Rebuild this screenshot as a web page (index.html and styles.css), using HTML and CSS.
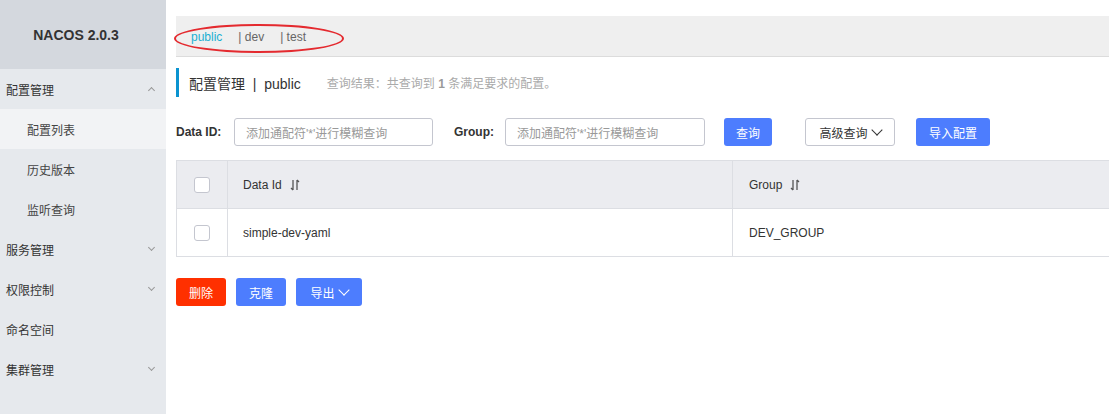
FILE: index.html
```html
<!DOCTYPE html>
<html lang="zh">
<head>
<meta charset="utf-8">
<title>NACOS</title>
<link rel="stylesheet" href="styles.css">
</head>
<body>
<div class="app">
  <aside class="sidebar">
    <div class="brand">NACOS 2.0.3</div>
    <ul class="menu">
      <li class="menu-item">配置管理<span class="chev up"></span></li>
      <li class="menu-item sub active">配置列表</li>
      <li class="menu-item sub">历史版本</li>
      <li class="menu-item sub">监听查询</li>
      <li class="menu-item">服务管理<span class="chev"></span></li>
      <li class="menu-item">权限控制<span class="chev"></span></li>
      <li class="menu-item">命名空间</li>
      <li class="menu-item">集群管理<span class="chev"></span></li>
    </ul>
  </aside>
  <main class="main">
    <div class="ns-bar">
      <span class="ns active">public</span>
      <span class="ns">| dev</span>
      <span class="ns">| test</span>
      <span class="ns-mark"></span>
    </div>
    <div class="title-row">
      <span class="title">配置管理 &nbsp;|&nbsp; public</span>
      <span class="result">查询结果：共查询到 <b>1</b> 条满足要求的配置。</span>
    </div>
    <div class="search-row">
      <label class="lbl">Data ID:</label>
      <div class="input">添加通配符'*'进行模糊查询</div>
      <label class="lbl lbl-group">Group:</label>
      <div class="input input-group">添加通配符'*'进行模糊查询</div>
      <button class="btn primary btn-query">查询</button>
      <button class="btn normal btn-adv">高级查询 <span class="down"></span></button>
      <button class="btn primary btn-import">导入配置</button>
    </div>
    <div class="table">
      <div class="tr thead">
        <div class="td c-check"><span class="cb"></span></div>
        <div class="td c-id">Data Id <svg class="sort" viewBox="0 0 10 12" width="10" height="12"><path d="M3 1v10M3 11L1 9M7 11V1M7 1l2 2" fill="none" stroke="#555" stroke-width="1.3"/></svg></div>
        <div class="td c-group">Group <svg class="sort" viewBox="0 0 10 12" width="10" height="12"><path d="M3 1v10M3 11L1 9M7 11V1M7 1l2 2" fill="none" stroke="#555" stroke-width="1.3"/></svg></div>
      </div>
      <div class="tr">
        <div class="td c-check"><span class="cb"></span></div>
        <div class="td c-id">simple-dev-yaml</div>
        <div class="td c-group">DEV_GROUP</div>
      </div>
    </div>
    <div class="actions">
      <button class="btn danger w50">删除</button>
      <button class="btn primary w50">克隆</button>
      <button class="btn primary w66">导出 <span class="down white"></span></button>
    </div>
  </main>
</div>
</body>
</html>
```

FILE: styles.css
```css
* { box-sizing: border-box; }
html, body { margin: 0; padding: 0; }
body {
  font-family: "Liberation Sans", "Noto Sans CJK SC", sans-serif;
  font-size: 12px;
  color: #333;
  background: #fff;
  width: 1109px;
  height: 414px;
  overflow: hidden;
}
.app { display: flex; height: 414px; }
.sidebar {
  width: 166px;
  flex: none;
  background: #e6e9ed;
}
.brand {
  height: 69px;
  background: #d4d8de;
  display: flex;
  align-items: center;
  justify-content: center;
  padding-right: 14px;
  font-weight: bold;
  font-size: 14px;
  color: #333;
}
.menu { list-style: none; margin: 0; padding: 0; }
.menu-item {
  height: 40px;
  display: flex;
  align-items: center;
  padding-left: 6px;
  position: relative;
  color: #333;
  font-size: 12px;
}
.menu-item.sub { padding-left: 27px; color: #444; }
.menu-item.active { background: #f2f3f5; }
.chev {
  position: absolute;
  right: 12px;
  top: 16px;
  width: 5px;
  height: 5px;
  border-right: 1px solid #999;
  border-bottom: 1px solid #999;
  transform: rotate(45deg);
}
.chev.up { top: 19px; transform: rotate(-135deg); }

.main {
  flex: 1;
  padding: 16px 0 0 10px;
  overflow: hidden;
}
.ns-bar {
  height: 41px;
  background: #efefef;
  border-bottom: 1px solid #dcdcdc;
  display: flex;
  align-items: center;
  padding-left: 15px;
  padding-top: 2px;
  position: relative;
  font-size: 12px;
  color: #666;
}
.ns { margin-right: 16px; }
.ns.active { color: #1cafd2; }
.ns-mark {
  position: absolute;
  left: -2px;
  top: 8px;
  width: 170px;
  height: 29px;
  border: 2px solid #e42a2f;
  border-radius: 50%;
}
.title-row {
  margin-top: 11px;
  height: 29px;
  border-left: 3px solid #0a93d0;
  padding-left: 10px;
  display: flex;
  align-items: center;
}
.title { font-size: 14px; color: #333; }
.result { margin-left: 26px; color: #aaa; font-size: 12px; }
.result b { color: #999; }

.search-row {
  margin-top: 21px;
  height: 28px;
  display: flex;
  align-items: center;
}
.lbl { font-weight: bold; color: #333; width: 58px; flex: none; white-space: nowrap; }
.lbl-group { margin-left: 21px; width: 51px; }
.input {
  width: 199px;
  flex: none;
  height: 28px;
  border: 1px solid #c4c6cf;
  border-radius: 3px;
  display: flex;
  align-items: center;
  padding-left: 11px;
  color: #999;
}
.input-group { width: 200px; }
.btn {
  height: 28px;
  flex: none;
  border: 1px solid transparent;
  border-radius: 3px;
  font-family: inherit;
  font-size: 12px;
  padding: 0;
  display: inline-flex;
  align-items: center;
  justify-content: center;
}
.primary { background: #4d7dfe; color: #fff; }
.danger { background: #ff3000; color: #fff; }
.normal { background: #fff; border-color: #c4c6cf; color: #333; }
.btn-query { width: 48px; margin-left: 19px; }
.btn-adv { width: 90px; margin-left: 33px; }
.btn-import { width: 74px; margin-left: 21px; }
.down {
  display: inline-block;
  width: 8px;
  height: 8px;
  border-right: 1px solid #333;
  border-bottom: 1px solid #333;
  transform: rotate(45deg);
  margin: -5px 0 0 5px;
}
.down.white { border-color: #fff; }

.table {
  margin-top: 14px;
  width: 1200px;
  border-left: 1px solid #dcdee3;
  border-top: 1px solid #dcdee3;
}
.tr {
  display: flex;
  height: 48px;
  border-bottom: 1px solid #dcdee3;
}
.thead { background: #ebecf0; height: 48px; }
.td {
  display: flex;
  align-items: center;
  height: 100%;
  color: #333;
}
.c-check { width: 51px; justify-content: center; border-right: 1px solid #dcdee3; }
.c-id { width: 505px; padding-left: 15px; border-right: 1px solid #dcdee3; }
.c-group { flex: 1; padding-left: 16px; }
.sort { margin-left: 8px; }
.cb {
  width: 16px;
  height: 16px;
  border: 1px solid #c4c6cf;
  border-radius: 3px;
  background: #fff;
}
.actions {
  margin-top: 21px;
  display: flex;
  gap: 10px;
}
.w50 { width: 50px; }
.w66 { width: 66px; }
```
